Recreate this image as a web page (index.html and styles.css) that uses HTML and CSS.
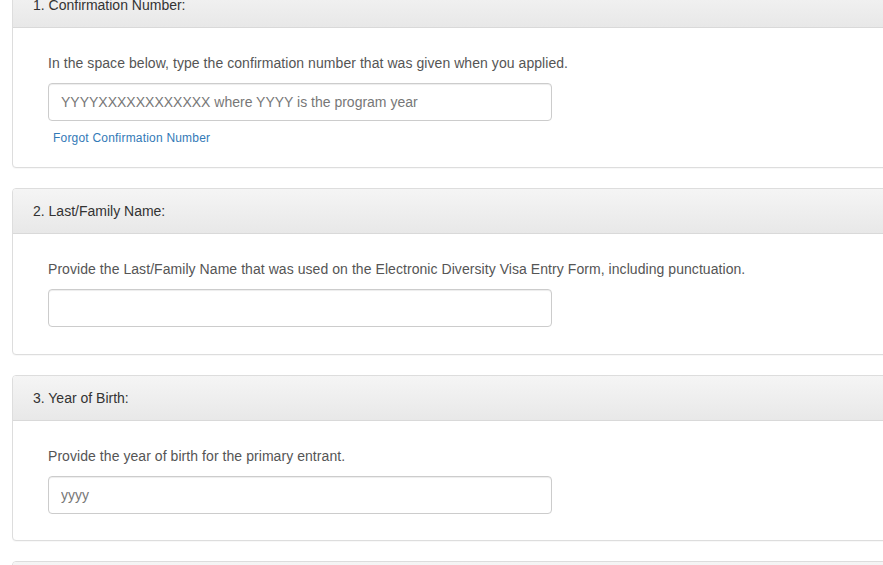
FILE: index.html
```html
<!DOCTYPE html>
<html>
<head>
<meta charset="utf-8">
<link rel="stylesheet" href="styles.css">
</head>
<body>
<div class="page">
  <div class="panel">
    <div class="panel-heading">1. Confirmation Number:</div>
    <div class="panel-body tight">
      <p class="hint">In the space below, type the confirmation number that was given when you applied.</p>
      <input class="field" type="text" placeholder="YYYYXXXXXXXXXXXX where YYYY is the program year">
      <a class="forgot" href="#">Forgot Confirmation Number</a>
    </div>
  </div>
  <div class="panel">
    <div class="panel-heading">2. Last/Family Name:</div>
    <div class="panel-body">
      <p class="hint">Provide the Last/Family Name that was used on the Electronic Diversity Visa Entry Form, including punctuation.</p>
      <input class="field" type="text">
    </div>
  </div>
  <div class="panel">
    <div class="panel-heading">3. Year of Birth:</div>
    <div class="panel-body">
      <p class="hint">Provide the year of birth for the primary entrant.</p>
      <input class="field" type="text" placeholder="yyyy">
    </div>
  </div>
  <div class="panel">
    <div class="panel-heading">4. Photograph:</div>
    <div class="panel-body">
      <p class="hint">&nbsp;</p>
    </div>
  </div>
</div>
</body>
</html>
```
FILE: styles.css
```css
html, body {
  margin: 0;
  padding: 0;
  overflow: hidden;
  background: #fff;
}
body {
  font-family: "Liberation Sans", Arial, sans-serif;
  font-size: 14px;
  line-height: 20px;
  color: #333;
}
.page {
  margin-top: -18px;
  padding-left: 12px;
  width: 920px;
}
.panel {
  border: 1px solid #ddd;
  border-radius: 4px;
  margin-bottom: 20px;
  background: #fff;
  box-shadow: 0 1px 1px rgba(0,0,0,0.03);
}
.panel-heading {
  height: 45px;
  box-sizing: border-box;
  padding: 12px 20px;
  border-bottom: 1px solid #d9d9d9;
  border-radius: 3px 3px 0 0;
  background: linear-gradient(to bottom, #f5f5f5 0%, #e8e8e8 100%);
  color: #333;
}
.panel-body {
  padding: 25px 35px 26.5px;
  display: flex;
  flex-direction: column;
  align-items: flex-start;
}
.panel-body.tight {
  padding-bottom: 19px;
}
.hint {
  margin: 0 0 10px;
  color: #555;
  letter-spacing: 0.06px;
}
.field {
  width: 504px;
  height: 38px;
  box-sizing: border-box;
  padding: 8px 12px;
  border: 1px solid #ccc;
  border-radius: 4px;
  font-family: "Liberation Sans", Arial, sans-serif;
  font-size: 14px;
  color: #555;
  box-shadow: inset 0 1px 1px rgba(0,0,0,0.075);
  outline: none;
}
.field::placeholder {
  color: #777;
}
.forgot {
  margin: 7px 0 0 5px;
  font-size: 12px;
  line-height: 20px;
  letter-spacing: 0.2px;
  color: #337ab7;
  text-decoration: none;
}
```
